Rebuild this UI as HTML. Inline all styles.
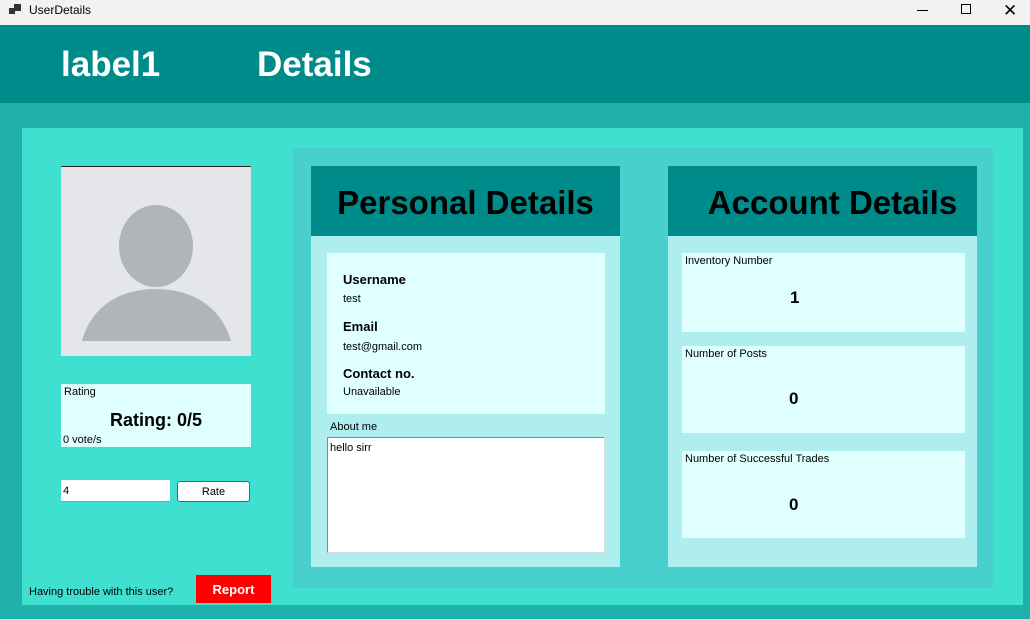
<!DOCTYPE html>
<html><head><style>
*{margin:0;padding:0;box-sizing:border-box}
body{width:1030px;height:619px;position:relative;overflow:hidden;font-family:"Liberation Sans",sans-serif;background:#20b2aa}
.a{position:absolute;white-space:nowrap}
.b{font-weight:bold}
</style></head><body>
<div class="a" style="left:0;top:0;width:1030px;height:25px;background:#f2f2f2"></div>
<div class="a" style="left:9px;top:8px;width:6px;height:6px;background:#333"></div>
<div class="a" style="left:14px;top:4px;width:7px;height:7px;background:#333"></div>
<div class="a" style="left:29px;top:3px;font-size:12px;color:#000">UserDetails</div>
<div class="a" style="left:917px;top:10px;width:11px;height:1px;background:#000"></div>
<div class="a" style="left:961px;top:4px;width:10px;height:10px;border:1px solid #000"></div>
<div class="a" style="left:1003px;top:1px;font-size:17px;color:#000">✕</div>

<div class="a" style="left:0;top:25px;width:1030px;height:78px;background:#008b8b"></div>
<div class="a b" style="left:61px;top:45px;font-size:35px;color:#fff">label1</div>
<div class="a b" style="left:257px;top:45px;font-size:35px;color:#fff">Details</div>

<div class="a" style="left:22px;top:128px;width:1001px;height:477px;background:#40e0d0"></div>
<div class="a" style="left:61px;top:166px;width:190px;height:190px;background:#e4e6e9;border-top:1px solid #222;overflow:hidden">
<svg width="190" height="190" style="position:absolute;left:0;top:-1px"><ellipse cx="95" cy="80" rx="37" ry="41" fill="#b0b5b9"/><path d="M21 175 C30 140 60 123 95 123 C130 123 160 140 170 175 Z" fill="#b0b5b9"/></svg></div>

<div class="a" style="left:61px;top:384px;width:190px;height:63px;background:#e0ffff"></div>
<div class="a" style="left:64px;top:386px;font-size:11px">Rating</div>
<div class="a b" style="left:61px;top:410px;width:190px;text-align:center;font-size:18px">Rating: 0/5</div>
<div class="a" style="left:63px;top:434px;font-size:11px">0 vote/s</div>
<div class="a" style="left:61px;top:480px;width:109px;height:22px;background:#fff;border-bottom:1px solid #999;font-size:11px;padding:5px 2px">4</div>
<div class="a" style="left:177px;top:481px;width:73px;height:21px;background:#fdfdfd;border:1px solid #0078d4;border-radius:3px;font-size:11px;text-align:center;line-height:20px">Rate</div>
<div class="a" style="left:29px;top:586px;font-size:11px">Having trouble with this user?</div>
<div class="a b" style="left:196px;top:575px;width:75px;height:28px;background:#f00;color:#fff;font-size:13px;text-align:center;line-height:29px">Report</div>

<div class="a" style="left:293px;top:148px;width:700px;height:440px;background:#48d1cc"></div>
<div class="a" style="left:311px;top:166px;width:309px;height:401px;background:#afeeee"></div>
<div class="a" style="left:311px;top:166px;width:309px;height:70px;background:#008b8b"></div>
<div class="a b" style="left:311px;top:184px;width:309px;text-align:center;font-size:33px;letter-spacing:0">Personal Details</div>
<div class="a" style="left:327px;top:253px;width:278px;height:161px;background:#e0ffff"></div>
<div class="a b" style="left:343px;top:272px;font-size:13px">Username</div>
<div class="a" style="left:343px;top:293px;font-size:11px">test</div>
<div class="a b" style="left:343px;top:319px;font-size:13px">Email</div>
<div class="a" style="left:343px;top:341px;font-size:11px">test@gmail.com</div>
<div class="a b" style="left:343px;top:366px;font-size:13px">Contact no.</div>
<div class="a" style="left:343px;top:386px;font-size:11px">Unavailable</div>
<div class="a" style="left:330px;top:421px;font-size:11px">About me</div>
<div class="a" style="left:327px;top:437px;width:278px;height:116px;background:#fff;border:1px solid #888;border-right-color:#ddd;border-bottom-color:#ddd;font-size:11px;padding:4px 2px">hello sirr</div>

<div class="a" style="left:668px;top:166px;width:309px;height:401px;background:#afeeee"></div>
<div class="a" style="left:668px;top:166px;width:309px;height:70px;background:#008b8b"></div>
<div class="a b" style="left:700px;top:184px;width:265px;text-align:center;font-size:33px;letter-spacing:0">Account Details</div>
<div class="a" style="left:682px;top:253px;width:283px;height:79px;background:#e0ffff"></div>
<div class="a" style="left:685px;top:255px;font-size:11px">Inventory Number</div>
<div class="a b" style="left:790px;top:288px;font-size:17px">1</div>
<div class="a" style="left:682px;top:346px;width:283px;height:87px;background:#e0ffff"></div>
<div class="a" style="left:685px;top:348px;font-size:11px">Number of Posts</div>
<div class="a b" style="left:789px;top:389px;font-size:17px">0</div>
<div class="a" style="left:682px;top:451px;width:283px;height:87px;background:#e0ffff"></div>
<div class="a" style="left:685px;top:453px;font-size:11px">Number of Successful Trades</div>
<div class="a b" style="left:789px;top:495px;font-size:17px">0</div>
</body></html>
